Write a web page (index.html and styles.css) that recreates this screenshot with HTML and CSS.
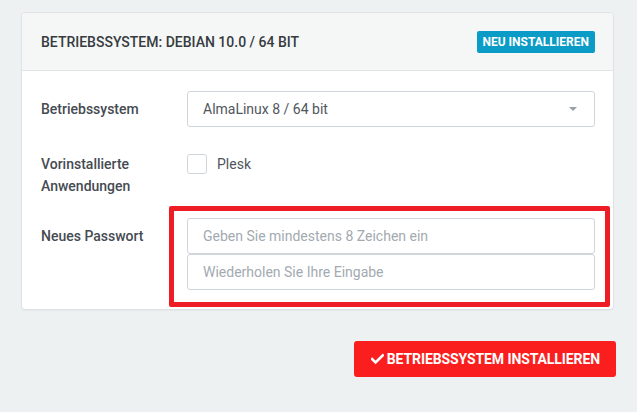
FILE: index.html
```html
<!DOCTYPE html>
<html lang="de">
<head>
  <meta charset="UTF-8" />
  <title>Betriebssystem neu installieren</title>
  <link rel="stylesheet" href="styles.css">
</head>
<body>
  <div class="page">
    <div class="card">
      <div class="card-header">
        <h2>Betriebssystem: Debian 10.0 / 64 bit</h2>
        <span class="badge">Neu installieren</span>
      </div>

      <div class="card-body">
        <div class="row row-os">
          <label class="label" for="os">Betriebssystem</label>
          <div class="field">
            <div class="select" id="os">
              <span>AlmaLinux 8 / 64 bit</span>
              <span class="caret"></span>
            </div>
          </div>
        </div>

        <div class="row row-apps">
          <label class="label">Vorinstallierte<br>Anwendungen</label>
          <div class="field check-field">
            <span class="checkbox"></span>
            <span class="check-text">Plesk</span>
          </div>
        </div>

        <div class="row row-pass">
          <label class="label" for="pw1">Neues Passwort</label>
          <div class="field">
            <input type="password" id="pw1" placeholder="Geben Sie mindestens 8 Zeichen ein">
            <input type="password" id="pw2" placeholder="Wiederholen Sie Ihre Eingabe">
          </div>
          <div class="highlight"></div>
        </div>
      </div>
    </div>

    <div class="actions">
      <button class="btn-install">
        <svg class="check" viewBox="0 0 16 14" width="13" height="12"><path d="M1.5 7.2 L5.6 11.3 L14.5 2.4" fill="none" stroke="#fff" stroke-width="3.2" stroke-linecap="square"/></svg>
        Betriebssystem installieren
      </button>
    </div>
  </div>
</body>
</html>
```

FILE: styles.css
```css
body {
  margin: 0;
  background-color: #eef1f2;
  font-family: Roboto, "Liberation Sans", sans-serif;
  color: #454b52;
}
.page {
  padding: 12px 21px 0 21px;
  width: 593px;
}
.card {
  background: #ffffff;
  border: 1px solid #dfe3e6;
  border-radius: 4px;
  box-shadow: 0 1px 1px rgba(0,0,0,0.04);
}
.card-header {
  height: 57px;
  display: flex;
  align-items: center;
  justify-content: space-between;
  padding: 0 18px 0 19px;
  background: #f5f7f7;
  border-bottom: 1px solid #e1e5e7;
  border-radius: 4px 4px 0 0;
}
.card-header h2 {
  margin: 0;
  font-size: 14px;
  font-weight: 500;
  text-transform: uppercase;
  color: #363b40;
}
.badge {
  background: #0a9bc7;
  color: #fff;
  font-size: 12px;
  font-weight: 700;
  text-transform: uppercase;
  height: 22px;
  line-height: 22px;
  padding: 0 6px;
  border-radius: 2px;
}
.card-body {
  padding: 20px 18px 19px 19px;
}
.row {
  display: flex;
  position: relative;
}
.row-os { margin-bottom: 26px; }
.row-apps { margin-bottom: 21px; }
.label {
  width: 146px;
  flex: none;
  font-size: 14px;
  font-weight: 500;
  line-height: 22px;
  padding-top: 7px;
  color: #454b52;
}
.row-apps .label { padding-top: 0; }
.field {
  flex: 1;
  display: flex;
  flex-direction: column;
}
.select {
  height: 34px;
  border: 1px solid #cfd5da;
  border-radius: 3px;
  display: flex;
  align-items: center;
  justify-content: space-between;
  padding: 0 17px 0 15px;
  font-size: 14px;
  color: #50565c;
}
.caret {
  width: 0;
  height: 0;
  border-left: 4px solid transparent;
  border-right: 4px solid transparent;
  border-top: 4px solid #9aa0a6;
}
.check-field {
  flex-direction: row;
  align-items: center;
  height: 22px;
}
.checkbox {
  width: 18px;
  height: 18px;
  border: 1px solid #cfd5da;
  border-radius: 3px;
  margin-right: 10px;
}
.check-text {
  font-size: 14px;
  color: #50565c;
}
input {
  height: 36px;
  box-sizing: border-box;
  border: 1px solid #cfd5da;
  border-radius: 3px;
  padding: 0 15px;
  font-family: Roboto, "Liberation Sans", sans-serif;
  font-size: 14px;
  margin: 0;
  outline: none;
}
input::placeholder {
  color: #a3aab1;
}
.highlight {
  position: absolute;
  left: 128px;
  top: -12px;
  right: -15px;
  bottom: -17px;
  border: 5px solid #ee1c25;
  border-radius: 2px;
  pointer-events: none;
}
.actions {
  display: flex;
  justify-content: flex-end;
  margin-top: 31px;
  margin-right: -2px;
}
.btn-install {
  height: 36px;
  padding: 0 16px 0 17px;
  background: #fa1e1e;
  border: none;
  border-radius: 3px;
  color: #fff;
  font-family: Roboto, "Liberation Sans", sans-serif;
  font-size: 14px;
  font-weight: 700;
  letter-spacing: -0.1px;
  text-transform: uppercase;
  display: flex;
  align-items: center;
  gap: 3px;
}
```
